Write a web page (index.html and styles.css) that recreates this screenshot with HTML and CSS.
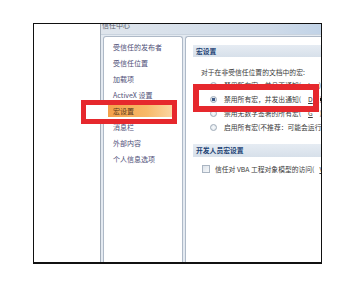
FILE: index.html
```html
<!DOCTYPE html>
<html lang="zh-CN">
<head>
    <meta charset="UTF-8">
    <meta name="viewport" content="width=device-width, initial-scale=1.0">
    <title>信任中心</title>
    <link rel="stylesheet" href="styles.css">
</head>
<body>
    <div class="page">
        <div class="frame">
            <div class="blank"></div>
            <div class="dialog">
                <div class="titlebar"><span>信任中心</span></div>
                <div class="dialog-body">
                    <div class="nav">
                        <div class="nav-item">受信任的发布者</div>
                        <div class="nav-item">受信任位置</div>
                        <div class="nav-item">加载项</div>
                        <div class="nav-item">ActiveX 设置</div>
                        <div class="nav-item selected">宏设置</div>
                        <div class="nav-item">消息栏</div>
                        <div class="nav-item">外部内容</div>
                        <div class="nav-item">个人信息选项</div>
                    </div>
                    <div class="content">
                        <div class="section-head">宏设置</div>
                        <p class="intro">对于在非受信任位置的文档中的宏:</p>
                        <div class="option"><span class="radio"></span>禁用所有宏，并且不通知(<u>L</u>)</div>
                        <div class="option"><span class="radio checked"></span>禁用所有宏，并发出通知(<u>D</u>)</div>
                        <div class="option"><span class="radio"></span>禁用无数字签署的所有宏(<u>G</u>)</div>
                        <div class="option"><span class="radio"></span>启用所有宏(不推荐：可能会运行有潜在危险的代码)(<u>E</u>)</div>
                        <div class="section-head dev">开发人员宏设置</div>
                        <div class="option check-row"><span class="checkbox"></span>信任对 VBA 工程对象模型的访问(<u>V</u>)</div>
                    </div>
                </div>
            </div>
            <div class="mark mark-nav"></div>
            <div class="mark mark-option"></div>
            <div class="pointer"></div>
        </div>
    </div>
</body>
</html>
```

FILE: styles.css
```css
body {
    margin: 0;
    background: #fff;
    font-family: "Noto Sans CJK SC", "Liberation Sans", sans-serif;
}
.page {
    padding: 23px 0 0 33px;
}
.frame {
    position: relative;
    width: 287px;
    height: 238px;
    border: 1px solid #111;
    border-bottom-width: 2px;
    display: flex;
    overflow: hidden;
}
.blank {
    width: 66px;
    flex: none;
}
.dialog {
    flex: none;
    width: 240px;
    display: flex;
    flex-direction: column;
    border-left: 1px solid #a3adb9;
    background: #e4eaf1;
}
.titlebar {
    height: 10px;
    overflow: hidden;
    background: linear-gradient(to right, #dfe5ec, #cfdbe9 70%, #bcd0e6);
    border-bottom: 1px solid #c9d3de;
    font-size: 7px;
    color: #5d6470;
}
.titlebar span {
    display: block;
    margin-top: -4px;
    padding-left: 1px;
    line-height: 10px;
}
.dialog-body {
    flex: 1;
    display: flex;
    gap: 2px;
    padding: 1px 0 0 2px;
}
.nav {
    width: 78px;
    flex: none;
    background: #fff;
    border: 1px solid #aeb9c7;
    border-bottom: none;
    border-radius: 3px 3px 0 0;
    padding-top: 2px;
    font-size: 7px;
    color: #4f5078;
}
.nav-item {
    line-height: 16px;
    padding-left: 9px;
    white-space: nowrap;
}
.nav-item.selected {
    margin: 2px 9px 2px 3px;
    line-height: 12px;
    padding-left: 6px;
    color: #5a3a1c;
    background: linear-gradient(to right, #f3a04a, #f7b968 60%, #fbd7a4);
}
.content {
    flex: none;
    width: 220px;
    background: #fff;
    border: 1px solid #aeb9c7;
    border-right: none;
    border-bottom: none;
    border-radius: 3px 0 0 0;
    font-size: 6.8px;
    color: #3a3a3a;
    white-space: nowrap;
}
.section-head {
    margin: 8px 0 0 7px;
    height: 12px;
    line-height: 12px;
    padding-left: 3px;
    font-weight: bold;
    color: #203f73;
    background: linear-gradient(#e6ecf3, #d7e0ea);
}
.section-head.dev {
    margin-top: 10px;
    height: 13px;
    line-height: 13px;
}
.intro {
    margin: 9px 0 0 15px;
    line-height: 12px;
}
.option {
    display: flex;
    align-items: center;
    gap: 7px;
    height: 14px;
    padding-left: 24px;
}
.radio {
    width: 5px;
    height: 5px;
    border: 1px solid #9fabb8;
    border-radius: 50%;
    background: radial-gradient(circle, #f7f9fb, #dfe5ec);
    flex: none;
}
.radio.checked {
    background: radial-gradient(circle, #3d5a86 0 1.6px, #e3e8ee 2px);
}
.check-row {
    margin-top: 5px;
    padding-left: 16px;
    gap: 5px;
}
.checkbox {
    width: 6px;
    height: 6px;
    border: 1px solid #aab5c2;
    background: linear-gradient(135deg, #dde3ea, #f6f8fa);
    flex: none;
}
.mark {
    position: absolute;
    border: 5px solid #e6282d;
    box-sizing: border-box;
}
.mark-nav {
    left: 47px;
    top: 76px;
    width: 96px;
    height: 24px;
    background: linear-gradient(to right, #fff 0 22px, transparent 22px);
}
.mark-option {
    left: 159px;
    top: 60px;
    width: 126px;
    height: 28px;
    border-width: 6px;
}
.pointer {
    position: absolute;
    left: 286px;
    top: 74px;
    width: 2px;
    height: 3px;
    background: #111;
}
```
